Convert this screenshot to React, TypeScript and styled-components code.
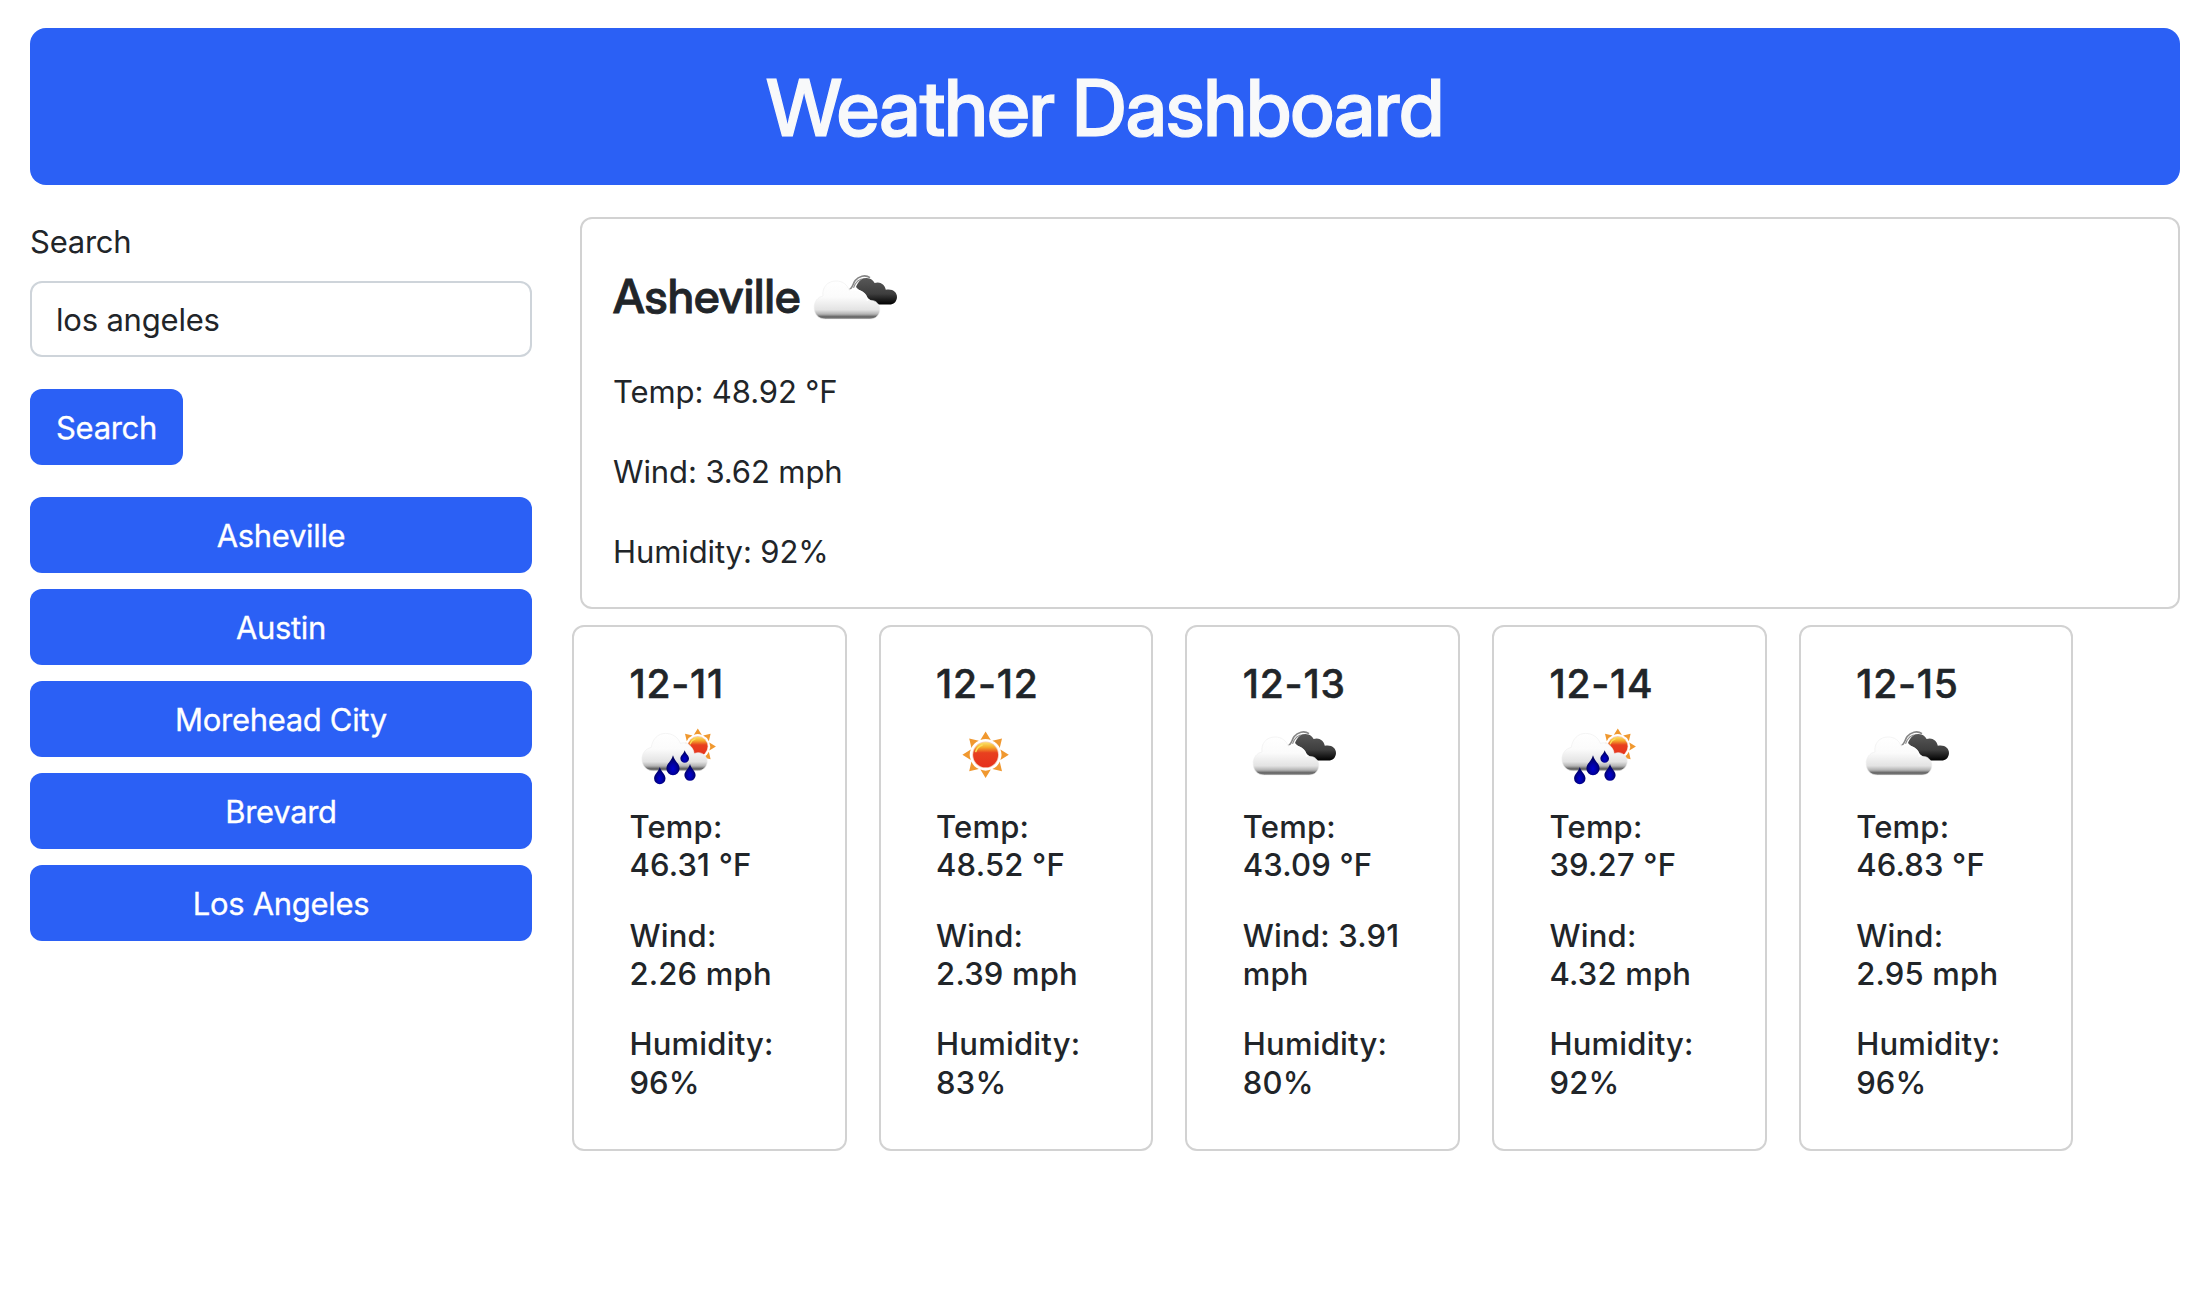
import React, { useId } from "react";
import styled, { createGlobalStyle } from "styled-components";

const GlobalStyle = createGlobalStyle`
  *, *::before, *::after { box-sizing: border-box; }
  body {
    margin: 0;
    background: #fff;
    color: #212529;
    font-family: Inter, "Liberation Sans", sans-serif;
    font-size: 31px;
    line-height: 48px;
    letter-spacing: -0.25px;
  }
  h1, h2, h3, p { margin: 0; }
`;

const Page = styled.div`
  padding: 28px 26px 0 30px;
`;

const Header = styled.header`
  display: flex;
  align-items: center;
  justify-content: center;
  height: 157px;
  padding-top: 2px;
  border-radius: 16px;
  background: #2b60f5;
`;

const Title = styled.h1`
  color: #f8f9fa;
  font-family: "Inter Display", Inter, sans-serif;
  font-size: 78px;
  font-weight: 500;
  line-height: 96px;
  letter-spacing: -0.8px;
  -webkit-text-stroke: 1.2px #f8f9fa;
`;

const Columns = styled.div`
  display: flex;
  gap: 40px;
  margin-top: 32px;
`;

const Sidebar = styled.aside`
  width: 502px;
  flex: none;
`;

const SearchForm = styled.form`
  display: flex;
  flex-direction: column;
  align-items: flex-start;
`;

const Label = styled.label`
  height: 48px;
  line-height: 50px;
`;

const SearchInput = styled.input`
  width: 100%;
  height: 76px;
  margin: 16px 0 32px;
  padding: 12px 24px;
  border: 2px solid #ced4da;
  border-radius: 12px;
  outline: none;
  background: #fff;
  color: inherit;
  font: inherit;
  letter-spacing: -0.2px;
`;

const Button = styled.button<{ $block?: boolean }>`
  width: ${(p) => (p.$block ? "100%" : "153px")};
  height: 76px;
  padding: 2px 0 0;
  border: none;
  border-radius: 12px;
  background: #2b60f5;
  color: #fff;
  font: inherit;
  letter-spacing: -0.32px;
  text-align: center;
  -webkit-text-stroke: 0.3px #fff;
`;

const History = styled.div`
  display: flex;
  flex-direction: column;
  gap: 16px;
  margin-top: 32px;
`;

const Main = styled.main`
  flex: 1;
  min-width: 0;
`;

const Panel = styled.section`
  border: 2px solid #d2d2d2;
  border-radius: 12px;
`;

const Current = styled(Panel)`
  height: 392px;
  margin-left: 8px;
  padding: 31px 32px 32px 31px;
`;

const City = styled.h2`
  display: flex;
  align-items: center;
  height: 100px;
  font-family: "Inter Display", Inter, sans-serif;
  font-size: 47px;
  font-weight: 500;
  letter-spacing: 0.1px;
`;

const CityName = styled.span`
  width: 191px;
  padding-bottom: 8px;
  white-space: nowrap;
  -webkit-text-stroke: 0.8px #212529;
`;

const Reading = styled.p`
  margin-bottom: 32px;
`;

const Readings = styled.div`
  margin-top: 18px;
  letter-spacing: -0.1px;
`;

const Forecast = styled.div`
  display: grid;
  grid-template-columns: repeat(5, 274.7px);
  gap: 32px;
  margin-top: 16px;
`;

const Day = styled(Panel)`
  height: 526px;
  padding: 32px 0 0 55.4px;
  font-weight: 500;
`;

const DayDate = styled.h3`
  height: 47px;
  font-size: 39px;
  font-weight: 500;
  line-height: 50px;
  letter-spacing: 0.8px;
  -webkit-text-stroke: 0.5px #212529;
`;

const DayReadings = styled.div`
  margin-top: 1.8px;
`;

const DayReading = styled.p`
  margin-bottom: 32px;
  line-height: 38.4px;
  letter-spacing: 0.2px;
  white-space: pre-line;
`;

const Icon = styled.svg`
  display: block;
  width: 100px;
  height: 100px;
  flex: none;
`;

function SunShape({ id, cx, cy, r }: { id: string; cx: number; cy: number; r: number }) {
  return (
    <g transform={`translate(${cx} ${cy}) scale(${r / 12.3})`}>
      <defs>
        <linearGradient id={id} x1="0" y1="0" x2="0" y2="1">
          <stop offset="0" stopColor="#fbe36a" />
          <stop offset="0.2" stopColor="#f5ab2c" />
          <stop offset="0.42" stopColor="#e8401f" />
          <stop offset="1" stopColor="#e6301c" />
        </linearGradient>
      </defs>
      {[0, 45, 90, 135, 180, 225, 270, 315].map((a) => (
        <path key={a} d="M0 -23.2 L5.2 -14.8 Q0 -17 -5.2 -14.8 Z" fill="#f0982f" transform={`rotate(${a})`} />
      ))}
      <circle r="13.3" fill="#f7c9b4" />
      <circle r="12.5" fill={`url(#${id})`} />
      <path d="M-9.8 -3.2 A10.4 10.4 0 0 1 -3.4 -9.8" fill="none" stroke="#fae05a" strokeWidth="1.5" strokeLinecap="round" />
    </g>
  );
}

function CloudGradient({ id }: { id: string }) {
  return (
    <linearGradient id={id} x1="0" y1="0" x2="0" y2="1">
      <stop offset="0" stopColor="#fff" />
      <stop offset="0.42" stopColor="#fbfbfb" />
      <stop offset="0.76" stopColor="#e3e3e3" />
      <stop offset="0.87" stopColor="#b4b4b4" />
      <stop offset="0.94" stopColor="#666" />
      <stop offset="1" stopColor="#808080" />
    </linearGradient>
  );
}

function CloudsIcon() {
  const id = useId();
  return (
    <Icon viewBox="0 0 100 100" aria-hidden="true">
      <defs>
        <CloudGradient id={`${id}w`} />
        <linearGradient id={`${id}d`} x1="0" y1="0" x2="0" y2="1">
          <stop offset="0" stopColor="#585858" />
          <stop offset="0.6" stopColor="#3e3e3e" />
          <stop offset="1" stopColor="#000" />
        </linearGradient>
      </defs>
      <path d="M45.6 39.6 C49 37.5 48.6 34 51.2 30.6 C54.5 26.2 61 24.2 66 27.6" fill="none" stroke="#858585" strokeWidth="1.6" />
      <path d="M49.5 37.8 C51.5 32 56 28.2 62 28.8" fill="none" stroke="#8f8f8f" strokeWidth="1.1" />
      <path
        d="M52 37 C54.5 29.6 60.5 26.6 65.4 28.4 C68 29.4 69.8 31 70.6 33 C75.6 31 80.8 34 81.8 39.8 C88.3 38.4 93.2 42 93 47.2 C92.6 51.9 89.5 54.5 85.5 54.5 H72.5 C66 50 58 44 52 37 Z"
        fill={`url(#${id}d)`}
      />
      <path
        d="M21.5 69 C14.5 69 10.2 64.3 10.2 57.5 C10.2 51.4 13.8 47 19 46 C17.8 37.5 23.5 31 32 31 C38.5 31 43.5 34.6 45.2 40.4 C54 37.5 63.5 43 63.4 51.2 C70 48.4 75.8 53.2 75.8 59.3 C75.8 65 71.8 69 66 69 Z"
        fill={`url(#${id}w)`}
        stroke="#ececec"
        strokeWidth="0.6"
      />
      <path d="M63.4 51 C63.4 43.2 54.6 38 45.6 40.3" fill="none" stroke="#fff" strokeWidth="1.4" />
    </Icon>
  );
}

const DROPS = [
  { x: 44, y: 49.2, w: 6.6, h: 20 },
  { x: 55.7, y: 44.2, w: 4.3, h: 12.6 },
  { x: 61, y: 58, w: 5.6, h: 16.8 },
  { x: 30.8, y: 61, w: 5.7, h: 17.2 },
];

function ShowersIcon() {
  const id = useId();
  return (
    <Icon viewBox="0 0 100 100" aria-hidden="true">
      <defs>
        <CloudGradient id={`${id}w`} />
        <radialGradient id={`${id}r`} cx="0.5" cy="0.68" r="0.55">
          <stop offset="0" stopColor="#0000d0" />
          <stop offset="0.4" stopColor="#0000a8" />
          <stop offset="1" stopColor="#00005a" />
        </radialGradient>
      </defs>
      <SunShape id={`${id}s`} cx={68.8} cy={40.5} r={9.6} />
      <path
        d="M24.5 64.8 C17.5 64.8 13 59.8 13 53.4 C13 47.2 16.6 42.6 22.2 41.4 C23.5 32.8 29 27.4 36.6 27.4 C43.8 27.4 49.5 31.8 51.4 37.4 C57.5 35 64.4 40.5 65.2 47.6 C71.5 44.6 78.2 49.2 78.2 55.4 C78.2 60.8 74 64.8 68.6 64.8 Z"
        fill={`url(#${id}w)`}
        stroke="#ececec"
        strokeWidth="0.6"
      />
      {DROPS.map((d) => {
        const b = d.y + d.h;
        return (
          <path
            key={d.x}
            d={`M${d.x} ${d.y} C${d.x + d.w * 0.25} ${d.y + d.h * 0.3} ${d.x + d.w} ${d.y + d.h * 0.42} ${d.x + d.w} ${b - d.w} A${d.w} ${d.w} 0 0 1 ${d.x - d.w} ${b - d.w} C${d.x - d.w} ${d.y + d.h * 0.42} ${d.x - d.w * 0.25} ${d.y + d.h * 0.3} ${d.x} ${d.y} Z`}
            fill={`url(#${id}r)`}
          />
        );
      })}
    </Icon>
  );
}

function SunIcon() {
  const id = useId();
  return (
    <Icon viewBox="0 0 100 100" aria-hidden="true">
      <SunShape id={id} cx={49.6} cy={48.8} r={12.3} />
    </Icon>
  );
}

const ICONS = { clouds: CloudsIcon, showers: ShowersIcon, sun: SunIcon };

const CITIES = ["Asheville", "Austin", "Morehead City", "Brevard", "Los Angeles"];

const DAYS: { date: string; icon: keyof typeof ICONS; temp: string; wind: string; humidity: string }[] = [
  { date: "12-11", icon: "showers", temp: "Temp:\n46.31 °F", wind: "Wind:\n2.26 mph", humidity: "Humidity:\n96%" },
  { date: "12-12", icon: "sun", temp: "Temp:\n48.52 °F", wind: "Wind:\n2.39 mph", humidity: "Humidity:\n83%" },
  { date: "12-13", icon: "clouds", temp: "Temp:\n43.09 °F", wind: "Wind: 3.91\nmph", humidity: "Humidity:\n80%" },
  { date: "12-14", icon: "showers", temp: "Temp:\n39.27 °F", wind: "Wind:\n4.32 mph", humidity: "Humidity:\n92%" },
  { date: "12-15", icon: "clouds", temp: "Temp:\n46.83 °F", wind: "Wind:\n2.95 mph", humidity: "Humidity:\n96%" },
];

export default function App() {
  return (
    <Page>
      <GlobalStyle />
      <Header>
        <Title>Weather Dashboard</Title>
      </Header>
      <Columns>
        <Sidebar>
          <SearchForm onSubmit={(e) => e.preventDefault()}>
            <Label htmlFor="city">Search</Label>
            <SearchInput id="city" defaultValue="los angeles" />
            <Button type="submit">Search</Button>
          </SearchForm>
          <History>
            {CITIES.map((c) => (
              <Button key={c} $block>
                {c}
              </Button>
            ))}
          </History>
        </Sidebar>
        <Main>
          <Current>
            <City>
              <CityName>Asheville</CityName>
              <CloudsIcon />
            </City>
            <Readings>
              <Reading>Temp: 48.92 °F</Reading>
              <Reading>Wind: 3.62 mph</Reading>
              <Reading>Humidity: 92%</Reading>
            </Readings>
          </Current>
          <Forecast>
            {DAYS.map((d) => {
              const DayIcon = ICONS[d.icon];
              return (
                <Day key={d.date}>
                  <DayDate>{d.date}</DayDate>
                  <DayIcon />
                  <DayReadings>
                    <DayReading>{d.temp}</DayReading>
                    <DayReading>{d.wind}</DayReading>
                    <DayReading>{d.humidity}</DayReading>
                  </DayReadings>
                </Day>
              );
            })}
          </Forecast>
        </Main>
      </Columns>
    </Page>
  );
}
